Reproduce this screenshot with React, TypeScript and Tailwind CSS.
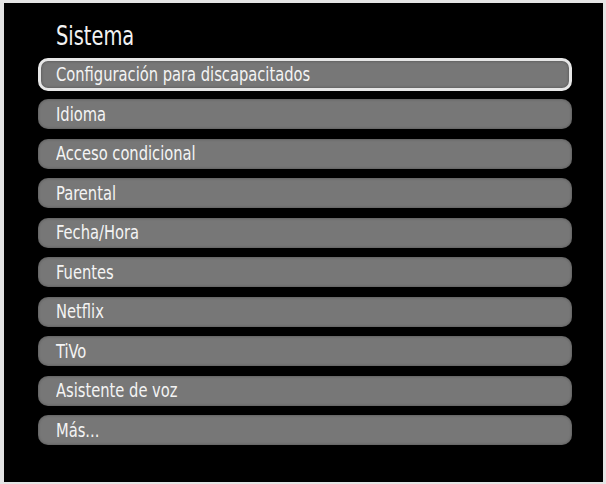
const ITEMS = [
  'Configuración para discapacitados',
  'Idioma',
  'Acceso condicional',
  'Parental',
  'Fecha/Hora',
  'Fuentes',
  'Netflix',
  'TiVo',
  'Asistente de voz',
  'Más...',
];

const font = { fontFamily: '"Liberation Sans Narrow", "DejaVu Sans Condensed", "Liberation Sans", sans-serif' };

export default function App() {
  return (
    <div className="w-[606px] h-[484px] bg-[#e4e4e4] pt-[3px] pl-[4px]" style={font}>
      <div className="w-[599px] h-[479px] bg-black pl-[34px] pr-[31px] pt-[16px]">
        <h1 className="text-[#f2f2f2] text-[27px] leading-[34px] pl-[18px]">
          <span className="inline-block origin-left scale-x-[0.8]">Sistema</span>
        </h1>
        <div className="flex flex-col gap-[8px] mt-[5px]">
          {ITEMS.map((label, i) => (
            <div
              key={label}
              className={`flex items-center rounded-[10px] bg-[#777777] text-[#f4f4f4] text-[19px] leading-none shadow-[inset_0_0_3px_rgba(0,0,0,0.35)] ${
                i === 0
                  ? 'h-[33px] border-[3px] border-[#e6e6e6] pl-[15px]'
                  : 'h-[30px] pl-[18px] mb-[1.5px]'
              }`}
            >
              <span className="inline-block origin-left scale-x-[0.86] whitespace-nowrap">{label}</span>
            </div>
          ))}
        </div>
      </div>
    </div>
  );
}
